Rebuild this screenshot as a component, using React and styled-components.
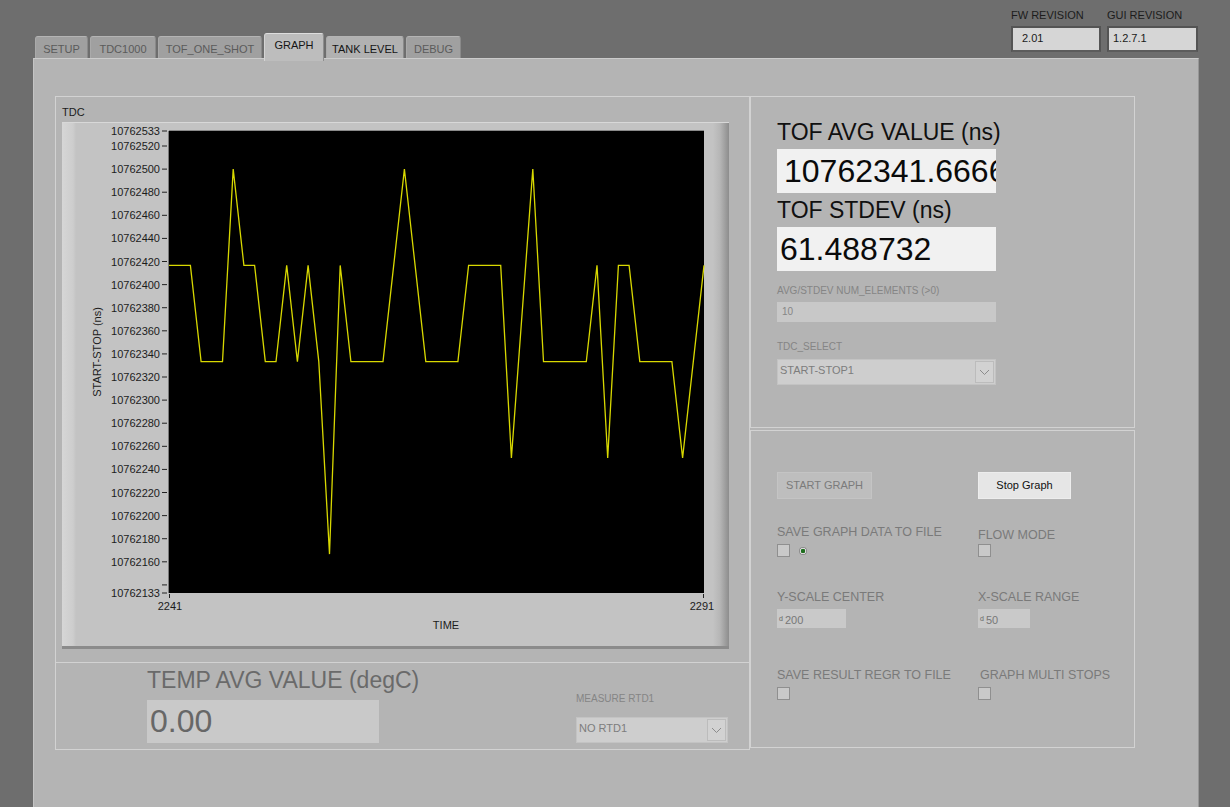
import React from "react"
import styled, { createGlobalStyle } from "styled-components"

const tabs = [
  { name: "SETUP", width: 53 },
  { name: "TDC1000", width: 66 },
  { name: "TOF_ONE_SHOT", width: 104 },
  { name: "GRAPH", width: 60, active: true },
  { name: "TANK LEVEL", width: 78, bright: true },
  { name: "DEBUG", width: 55 },
]

// offsets from 10762000, one per TIME step 2241..2291
const samples = [
  416.67, 416.67, 416.67, 333.33, 333.33, 333.33, 500, 416.67, 416.67, 333.33,
  333.33, 416.67, 333.33, 416.67, 333.33, 166.67, 416.67, 333.33, 333.33, 333.33,
  333.33, 416.67, 500, 416.67, 333.33, 333.33, 333.33, 333.33, 416.67, 416.67,
  416.67, 416.67, 250, 375, 500, 333.33, 333.33, 333.33, 333.33, 333.33,
  416.67, 250, 416.67, 416.67, 333.33, 333.33, 333.33, 333.33, 250, 333.33,
  416.67,
]

const yTicks = [533, 520, 500, 480, 460, 440, 420, 400, 380, 360, 340, 320, 300, 280, 260, 240, 220, 200, 180, 160, 133]

const PLOT = { x: 107, y: 8, w: 535, h: 462 }
const yPos = (v) => PLOT.y + ((533 - v) * PLOT.h) / 400
const xPos = (i) => PLOT.x + (i * PLOT.w) / 50

const App = () => {
  const points = samples.map((v, i) => `${xPos(i).toFixed(1)},${yPos(v).toFixed(1)}`).join(" ")
  return (
    <Page>
      <GlobalStyle />
      <Header>
        <TabRow>
          {tabs.map((t) => (
            <Tab key={t.name} $width={t.width} $active={t.active} $bright={t.bright}>
              {t.name}
            </Tab>
          ))}
        </TabRow>
        <RevisionGroup>
          <RevisionItem>
            <RevisionLabel>FW REVISION</RevisionLabel>
            <RevisionBox $w={90} $pad={9}>2.01</RevisionBox>
          </RevisionItem>
          <RevisionItem>
            <RevisionLabel>GUI REVISION</RevisionLabel>
            <RevisionBox $w={91} $pad={4}>1.2.7.1</RevisionBox>
          </RevisionItem>
        </RevisionGroup>
      </Header>

      <Panel>
        <LeftColumn>
          <ChartSection>
            <GraphTitle>TDC</GraphTitle>
            <GraphFrame>
              <svg width="667" height="523" viewBox="0 0 667 523">
                <rect x={PLOT.x} y={PLOT.y} width={PLOT.w} height={PLOT.h} fill="#000" />
                <line x1={PLOT.x - 0.5} y1={PLOT.y} x2={PLOT.x - 0.5} y2={PLOT.y + PLOT.h} stroke="#7a7a7a" />
                <line x1={PLOT.x} y1={PLOT.y - 0.5} x2={PLOT.x + PLOT.w} y2={PLOT.y - 0.5} stroke="#8a8a8a" />
                <polyline points={points} fill="none" stroke="#d8d800" strokeWidth="1.3" strokeLinejoin="miter" />
                <g fontFamily="Liberation Sans, Arial, sans-serif" fontSize="11" fill="#1c1c1c">
                  {yTicks.map((v) => (
                    <g key={v}>
                      <line x1="100" x2="105" y1={yPos(v)} y2={yPos(v)} stroke="#222" strokeWidth="1" />
                      <text x="98" y={yPos(v) + 4} textAnchor="end">{10762000 + v}</text>
                    </g>
                  ))}
                  <line x1="100" x2="105" y1={yPos(140)} y2={yPos(140)} stroke="#222" strokeWidth="1" />
                  <line x1={PLOT.x + 0.5} x2={PLOT.x + 0.5} y1={PLOT.y + PLOT.h + 1} y2={PLOT.y + PLOT.h + 5} stroke="#222" />
                  <line x1={PLOT.x + PLOT.w - 0.5} x2={PLOT.x + PLOT.w - 0.5} y1={PLOT.y + PLOT.h + 1} y2={PLOT.y + PLOT.h + 5} stroke="#222" />
                  <text x={PLOT.x + 1} y="487" textAnchor="middle">2241</text>
                  <text x={PLOT.x + PLOT.w - 2} y="487" textAnchor="middle">2291</text>
                  <text x="384" y="506" textAnchor="middle">TIME</text>
                  <text x="39" y="229" textAnchor="middle" transform="rotate(-90 39 229)">START-STOP (ns)</text>
                </g>
              </svg>
            </GraphFrame>
          </ChartSection>
          <TempSection>
            <TempGroup>
              <BigLabel $dim>TEMP AVG VALUE (degC)</BigLabel>
              <ValueBox $w={232} $h={43} $dim $pad={3}>0.00</ValueBox>
            </TempGroup>
            <MeasureGroup>
              <SmallLabel>MEASURE RTD1</SmallLabel>
              <Dropdown $w={152}>
                <DropText>NO RTD1</DropText>
                <DropArrow><Chevron /></DropArrow>
              </Dropdown>
            </MeasureGroup>
          </TempSection>
        </LeftColumn>

        <RightColumn>
          <StatsSection>
            <BigLabel>TOF AVG VALUE (ns)</BigLabel>
            <ValueBox $w={219} $h={44} $pad={7}>10762341.6666</ValueBox>
            <BigLabel $top={2}>TOF STDEV (ns)</BigLabel>
            <ValueBox $w={219} $h={44} $pad={3}>61.488732</ValueBox>
            <SmallLabel $top={13}>AVG/STDEV NUM_ELEMENTS (&gt;0)</SmallLabel>
            <NumBox $w={219}>10</NumBox>
            <SmallLabel $top={18}>TDC_SELECT</SmallLabel>
            <Dropdown $w={219}>
              <DropText>START-STOP1</DropText>
              <DropArrow><Chevron /></DropArrow>
            </Dropdown>
          </StatsSection>

          <ControlsSection>
            <ControlRow>
              <GraphButton $w={95} $disabled>START GRAPH</GraphButton>
              <GraphButton $w={93}>Stop Graph</GraphButton>
            </ControlRow>
            <ControlRow $top={25}>
              <Field>
                <FieldLabel>SAVE GRAPH DATA TO FILE</FieldLabel>
                <CheckLine>
                  <Checkbox />
                  <Led />
                </CheckLine>
              </Field>
              <Field>
                <FieldLabel $shift={3}>FLOW MODE</FieldLabel>
                <CheckLine><Checkbox /></CheckLine>
              </Field>
            </ControlRow>
            <ControlRow $top={32}>
              <Field>
                <FieldLabel>Y-SCALE CENTER</FieldLabel>
                <NumInput $w={69}><Rep>d</Rep>200</NumInput>
              </Field>
              <Field>
                <FieldLabel>X-SCALE RANGE</FieldLabel>
                <NumInput $w={52}><Rep>d</Rep>50</NumInput>
              </Field>
            </ControlRow>
            <ControlRow $top={39}>
              <Field>
                <FieldLabel>SAVE RESULT REGR TO FILE</FieldLabel>
                <CheckLine><Checkbox /></CheckLine>
              </Field>
              <Field>
                <FieldLabel $indent={2}>GRAPH MULTI STOPS</FieldLabel>
                <CheckLine><Checkbox /></CheckLine>
              </Field>
            </ControlRow>
          </ControlsSection>
        </RightColumn>
      </Panel>
    </Page>
  )
}

const Chevron = () => (
  <svg width="11" height="7" viewBox="0 0 11 7">
    <polyline points="1,1 5.5,5.5 10,1" fill="none" stroke="#8c8c8c" strokeWidth="1" />
  </svg>
)

export default App

const GlobalStyle = createGlobalStyle`
  html, body {
    margin: 0;
    padding: 0;
    background: #6e6e6e;
  }
  body {
    font-family: "Liberation Sans", Arial, sans-serif;
    overflow: hidden;
  }
  * {
    box-sizing: border-box;
  }
`

const Page = styled.div`
  width: 1230px;
  height: 807px;
  display: flex;
  flex-direction: column;
  background: #6e6e6e;
  overflow: hidden;
`

const Header = styled.div`
  height: 58px;
  flex: none;
  display: flex;
  justify-content: space-between;
  align-items: flex-end;
  padding: 0 32px 0 35px;
`

const TabRow = styled.div`
  display: flex;
  align-items: flex-end;
  gap: 2px;
  position: relative;
  z-index: 2;
`

const Tab = styled.div`
  width: ${(p) => p.$width}px;
  height: ${(p) => (p.$active ? 28 : 22)}px;
  margin-bottom: ${(p) => (p.$active ? -3 : 0)}px;
  padding-top: ${(p) => (p.$active ? 4 : 5)}px;
  text-align: center;
  font-size: 11px;
  line-height: 14px;
  border-radius: 3px 3px 0 0;
  background: ${(p) => (p.$active ? "#bdbdbd" : p.$bright ? "#b1b1b1" : "#a0a0a0")};
  color: ${(p) => (p.$active || p.$bright ? "#151515" : "#5b5b5b")};
  border-top: 1px solid ${(p) => (p.$active ? "#dedede" : "#b4b4b4")};
  border-left: 1px solid ${(p) => (p.$active ? "#d4d4d4" : "#aaaaaa")};
  border-right: 1px solid ${(p) => (p.$active ? "#8e8e8e" : "#8a8a8a")};
`

const RevisionGroup = styled.div`
  align-self: flex-start;
  display: flex;
  gap: 6px;
  padding-top: 8px;
`

const RevisionItem = styled.div`
  display: flex;
  flex-direction: column;
  gap: 4px;
`

const RevisionLabel = styled.div`
  font-size: 11px;
  line-height: 14px;
  color: #1c1c1c;
`

const RevisionBox = styled.div`
  width: ${(p) => p.$w}px;
  height: 26px;
  background: #d6d6d6;
  border: 2px solid #545454;
  border-bottom-color: #5c5c5c;
  padding-left: ${(p) => p.$pad}px;
  font-size: 11px;
  line-height: 20px;
  color: #1a1a1a;
`

const Panel = styled.div`
  flex: 1;
  margin-left: 33px;
  width: 1166px;
  background: #b4b4b4;
  border-top: 1px solid #cbcbcb;
  border-left: 1px solid #c4c4c4;
  border-right: 1px solid #979797;
  padding: 37px 0 0 21px;
  display: flex;
  align-items: flex-start;
`

const LeftColumn = styled.div`
  width: 695px;
  display: flex;
  flex-direction: column;
`

const RightColumn = styled.div`
  width: 385px;
  display: flex;
  flex-direction: column;
  gap: 2px;
`

const Section = styled.div`
  border: 1px solid #d2d2d2;
`

const ChartSection = styled(Section)`
  height: 567px;
  padding: 8px 0 0 6px;
`

const GraphTitle = styled.div`
  font-size: 11px;
  line-height: 14px;
  color: #1c1c1c;
  margin-bottom: 3px;
`

const GraphFrame = styled.div`
  width: 667px;
  height: 527px;
  border-top: 1px solid #d8d8d8;
  border-bottom: 3px solid #8b8b8b;
  background: linear-gradient(
    to right,
    #d6d6d6 0px,
    #cdcdcd 11px,
    #c3c3c3 14px,
    #c3c3c3 calc(100% - 16px),
    #b6b6b6 calc(100% - 9px),
    #8d8d8d 100%
  );

  svg {
    display: block;
  }
`

const TempSection = styled(Section)`
  height: 87px;
  border-top: none;
  padding: 2px 0 6px 91px;
  display: flex;
  align-items: flex-end;
`

const TempGroup = styled.div`
  width: 232px;
  display: flex;
  flex-direction: column;
  gap: 3px;
`

const MeasureGroup = styled.div`
  margin-left: 197px;
  display: flex;
  flex-direction: column;
  gap: 6px;
`

const BigLabel = styled.div`
  margin-top: ${(p) => p.$top || 0}px;
  font-size: 23px;
  line-height: 30px;
  height: 30px;
  white-space: nowrap;
  color: ${(p) => (p.$dim ? "#6a6a6a" : "#101010")};
`

const ValueBox = styled.div`
  width: ${(p) => p.$w}px;
  height: ${(p) => p.$h}px;
  margin-top: 2px;
  background: ${(p) => (p.$dim ? "#c9c9c9" : "#f1f1f1")};
  color: ${(p) => (p.$dim ? "#676767" : "#0a0a0a")};
  font-size: 32px;
  line-height: ${(p) => p.$h}px;
  padding-left: ${(p) => p.$pad}px;
  white-space: nowrap;
  overflow: hidden;
`

const SmallLabel = styled.div`
  margin-top: ${(p) => p.$top || 0}px;
  font-size: 10px;
  line-height: 14px;
  color: #858585;
  white-space: nowrap;
`

const NumBox = styled.div`
  width: ${(p) => p.$w}px;
  height: 20px;
  margin-top: 4px;
  background: #c8c8c8;
  font-size: 10px;
  line-height: 20px;
  padding-left: 5px;
  color: #868686;
`

const Dropdown = styled.div`
  width: ${(p) => p.$w}px;
  height: 26px;
  margin-top: 5px;
  background: #cecece;
  border: 1px solid #c3c3c3;
  display: flex;
`

const DropText = styled.div`
  flex: 1;
  font-size: 11px;
  line-height: 14px;
  padding: 3px 0 0 2px;
  color: #7d7d7d;
`

const DropArrow = styled.div`
  width: 19px;
  margin: 1px 1px 1px 0;
  border: 1px solid #bcbcbc;
  background: #d2d2d2;
  display: flex;
  align-items: center;
  justify-content: center;
`

const StatsSection = styled(Section)`
  height: 332px;
  padding: 20px 0 0 26px;
`

const ControlsSection = styled(Section)`
  height: 318px;
  padding: 41px 0 0 26px;
`

const ControlRow = styled.div`
  display: grid;
  grid-template-columns: 201px auto;
  margin-top: ${(p) => p.$top || 0}px;
`

const GraphButton = styled.div`
  width: ${(p) => p.$w}px;
  height: 27px;
  background: ${(p) => (p.$disabled ? "#bebebe" : "#e6e6e6")};
  border: 1px solid ${(p) => (p.$disabled ? "#c4c4c4" : "#ededed")};
  color: ${(p) => (p.$disabled ? "#7b7b7b" : "#111")};
  font-size: 11px;
  line-height: 25px;
  text-align: center;
`

const Field = styled.div`
  display: flex;
  flex-direction: column;
  gap: 4px;
`

const FieldLabel = styled.div`
  font-size: 12.5px;
  line-height: 16px;
  color: #7a7a7a;
  white-space: nowrap;
  padding-left: ${(p) => p.$indent || 0}px;
  transform: translateY(${(p) => p.$shift || 0}px);
`

const CheckLine = styled.div`
  display: flex;
  align-items: center;
  gap: 9px;
  height: 13px;
`

const Checkbox = styled.div`
  width: 13px;
  height: 13px;
  background: #c9c9c9;
  border: 1px solid #8f8f8f;
`

const Led = styled.div`
  width: 8px;
  height: 8px;
  border-radius: 50%;
  background: radial-gradient(circle, #1f6e1f 0 2px, #d8d8d8 2.5px 3px, #8c8c8c 3.5px);
`

const NumInput = styled.div`
  width: ${(p) => p.$w}px;
  height: 19px;
  background: #c9c9c9;
  font-size: 11px;
  line-height: 19px;
  color: #777;
  padding-left: 2px;
`

const Rep = styled.span`
  font-size: 7px;
  vertical-align: 3px;
  margin-right: 2px;
  color: #666;
`
